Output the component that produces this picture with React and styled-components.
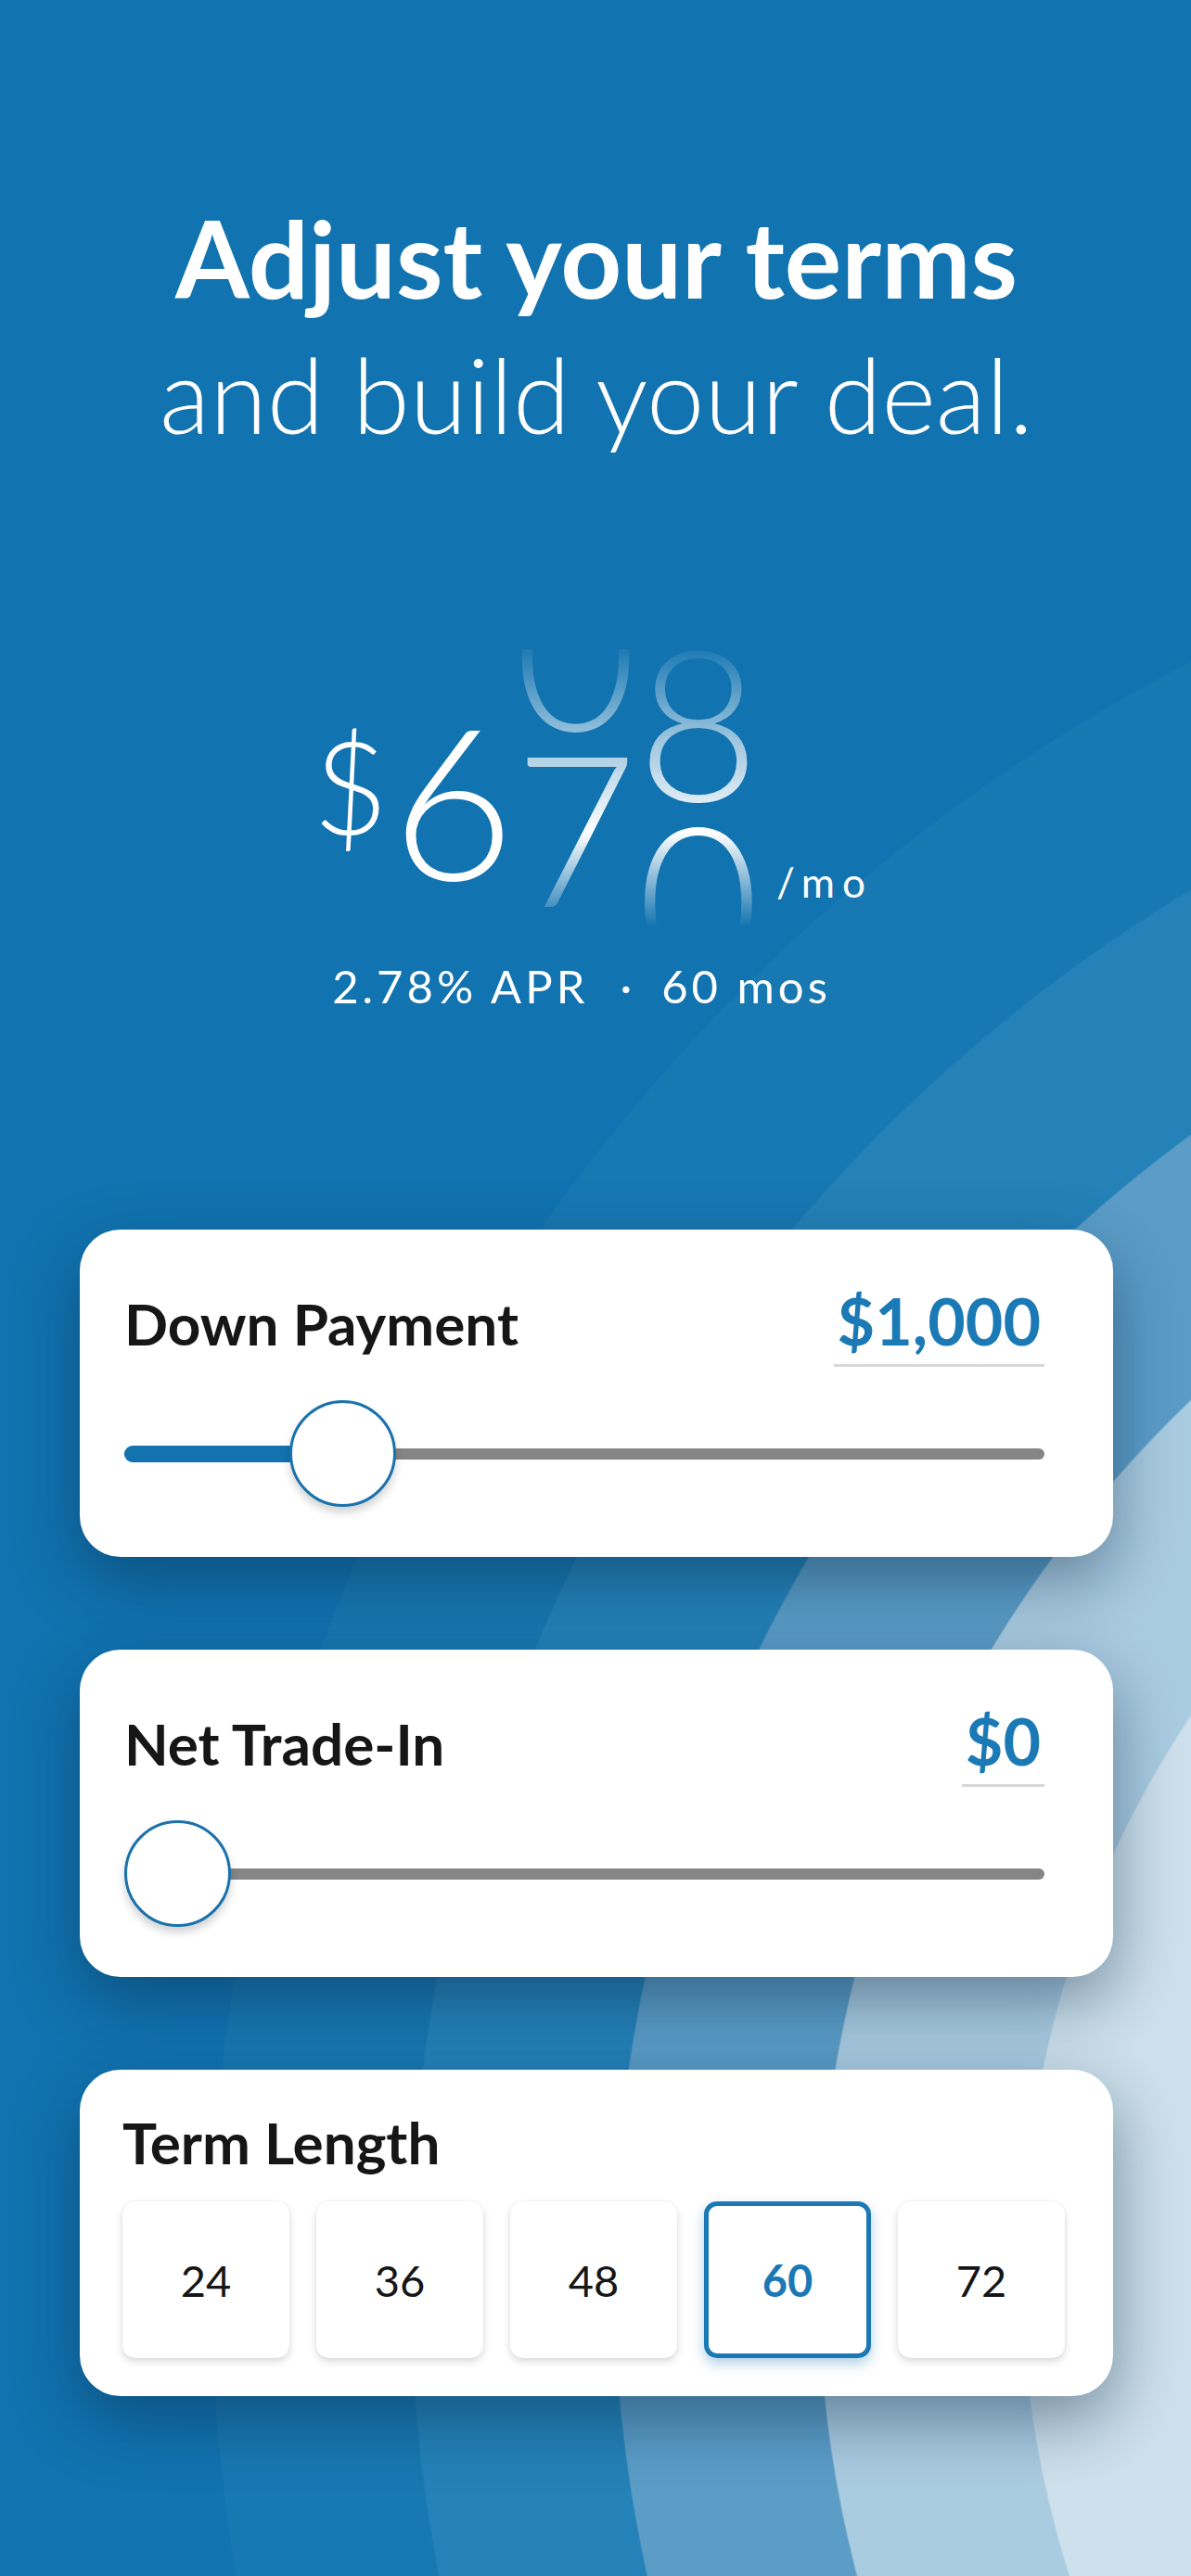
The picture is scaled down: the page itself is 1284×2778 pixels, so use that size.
import React from "react";
import styled, { createGlobalStyle, css } from "styled-components";

const GlobalStyle = createGlobalStyle`
  html, body {
    margin: 0;
    padding: 0;
  }
  body {
    font-family: Lato, "Open Sans", sans-serif;
    background: #1173b0;
  }
`;

const Page = styled.div`
  position: relative;
  width: 1284px;
  min-height: 2778px;
  overflow: hidden;
  box-sizing: border-box;
  padding: 203px 84px 0 86px;
  background: radial-gradient(
    circle at 2182px 2450px,
    #cde0eb 0 1079px,
    #aacce1 1081px 1299px,
    #5b9dc7 1301px 1519px,
    #2482b8 1521px 1739px,
    #1878b2 1741px 1954px,
    #1173b0 1956px
  );
`;

const Heading = styled.h1`
  margin: 0;
  text-align: center;
  color: #fff;
  font-size: 115px;
  line-height: 148px;
  font-weight: 700;

  span {
    display: block;
    font-size: 112px;
    font-weight: 300;
  }
`;

const PriceRow = styled.div`
  margin-top: 201px;
  height: 300px;
  padding-right: 16px;
  display: flex;
  justify-content: center;
  align-items: flex-start;
  color: #fff;
`;

const Dollar = styled.span`
  font-size: 140px;
  line-height: 140px;
  font-weight: 300;
  margin-top: 76px;
  margin-right: 4px;
`;

const DigitWindow = styled.div`
  height: 300px;
  width: 0.58em;
  overflow: hidden;
  font-size: 228px;
  line-height: 190px;
  font-weight: 300;
  text-align: center;

  ${(p) =>
    p.$rolling &&
    css`
      -webkit-mask-image: linear-gradient(
        to bottom,
        rgba(0, 0, 0, 0.05) 0%,
        rgba(0, 0, 0, 0.6) 33%,
        #000 66%,
        transparent 100%
      );
      mask-image: linear-gradient(
        to bottom,
        rgba(0, 0, 0, 0.05) 0%,
        rgba(0, 0, 0, 0.6) 33%,
        #000 66%,
        transparent 100%
      );
    `}
`;

const DigitStrip = styled.div`
  display: flex;
  flex-direction: column;
`;

const PerMonth = styled.span`
  font-size: 44px;
  line-height: 44px;
  letter-spacing: 8px;
  margin-top: 229px;
  margin-left: 18px;
  margin-right: -8px;
`;

const Terms = styled.p`
  margin: 33px 0 0;
  padding-right: 32px;
  text-align: center;
  color: #fff;
  font-size: 49px;
  line-height: 60px;
  letter-spacing: 4px;
`;

const Dot = styled.span`
  margin: 0 28px 0 34px;
`;

const CardList = styled.div`
  margin-top: 233px;
  display: flex;
  flex-direction: column;
  gap: 100px;
`;

const Card = styled.section`
  background: #fff;
  border-radius: 44px;
  box-shadow: 0 26px 70px rgba(6, 38, 66, 0.45);
  padding: 62px 74px 54px 48px;
`;

const TermCard = styled(Card)`
  padding: 42px 52px 41px 46px;
`;

const CardHeader = styled.div`
  display: flex;
  justify-content: space-between;
  align-items: baseline;
`;

const Label = styled.h2`
  margin: 0;
  font-size: 62px;
  line-height: 72px;
  font-weight: 700;
  color: #161616;
`;

const Value = styled.div`
  font-size: 70px;
  line-height: 72px;
  font-weight: 700;
  color: #1b7ab6;
  padding: 0 4px 11px;
  border-bottom: 3px solid #d7d7dd;
`;

const Slider = styled.div`
  position: relative;
  height: 115px;
  margin-top: 36px;
  display: flex;
  align-items: center;
`;

const Rail = styled.div`
  flex: 1;
  height: 12px;
  border-radius: 6px;
  background: #858585;
`;

const Fill = styled.div`
  position: absolute;
  left: 0;
  top: 50%;
  height: 18px;
  margin-top: -9px;
  border-radius: 9px;
  background: #1273ae;
`;

const Thumb = styled.div`
  position: absolute;
  top: 0;
  width: 115px;
  height: 115px;
  box-sizing: border-box;
  border-radius: 50%;
  background: #fff;
  border: 3px solid #1a72ad;
  box-shadow: 0 6px 10px rgba(0, 0, 0, 0.18);
`;

const TermGrid = styled.div`
  margin-top: 28px;
  display: grid;
  grid-template-columns: repeat(5, 1fr);
  gap: 29px;
`;

const TermButton = styled.button`
  height: 169px;
  border-radius: 14px;
  background: #fff;
  border: 5px solid ${(p) => (p.$active ? "#1b78b5" : "transparent")};
  box-shadow: ${(p) =>
    p.$active
      ? "0 6px 14px rgba(27, 120, 181, 0.35)"
      : "0 4px 8px rgba(0, 0, 0, 0.14), 0 0 3px rgba(0, 0, 0, 0.06)"};
  font-family: inherit;
  font-size: 47px;
  font-weight: ${(p) => (p.$active ? 700 : 400)};
  color: ${(p) => (p.$active ? "#1b78b5" : "#161616")};
  display: flex;
  align-items: center;
  justify-content: center;
  padding: 0;
`;

const digitColumns = [
  { digits: ["6"], offset: 66 },
  { digits: ["0", "7"], offset: -95, rolling: true },
  { digits: ["8", "0"], offset: -19, rolling: true },
];

const terms = [24, 36, 48, 60, 72];

function SliderCard({ label, value, pct }) {
  return (
    <Card>
      <CardHeader>
        <Label>{label}</Label>
        <Value>{value}</Value>
      </CardHeader>
      <Slider>
        <Rail />
        {pct > 0 && <Fill style={{ width: `calc((100% - 115px) * ${pct} + 57px)` }} />}
        <Thumb style={{ left: `calc((100% - 115px) * ${pct})` }} />
      </Slider>
    </Card>
  );
}

function App() {
  return (
    <Page>
      <GlobalStyle />
      <Heading>
        Adjust your terms
        <span>and build your deal.</span>
      </Heading>

      <PriceRow>
        <Dollar>$</Dollar>
        {digitColumns.map((col, i) => (
          <DigitWindow key={i} $rolling={col.rolling}>
            <DigitStrip style={{ transform: `translateY(${col.offset}px)` }}>
              {col.digits.map((d, j) => (
                <span key={j}>{d}</span>
              ))}
            </DigitStrip>
          </DigitWindow>
        ))}
        <PerMonth>/mo</PerMonth>
      </PriceRow>

      <Terms>
        2.78% APR<Dot>·</Dot>60 mos
      </Terms>

      <CardList>
        <SliderCard label="Down Payment" value="$1,000" pct={0.203} />
        <SliderCard label="Net Trade-In" value="$0" pct={0} />
        <TermCard>
          <Label>Term Length</Label>
          <TermGrid>
            {terms.map((t) => (
              <TermButton key={t} $active={t === 60}>
                {t}
              </TermButton>
            ))}
          </TermGrid>
        </TermCard>
      </CardList>
    </Page>
  );
}

export default App;
